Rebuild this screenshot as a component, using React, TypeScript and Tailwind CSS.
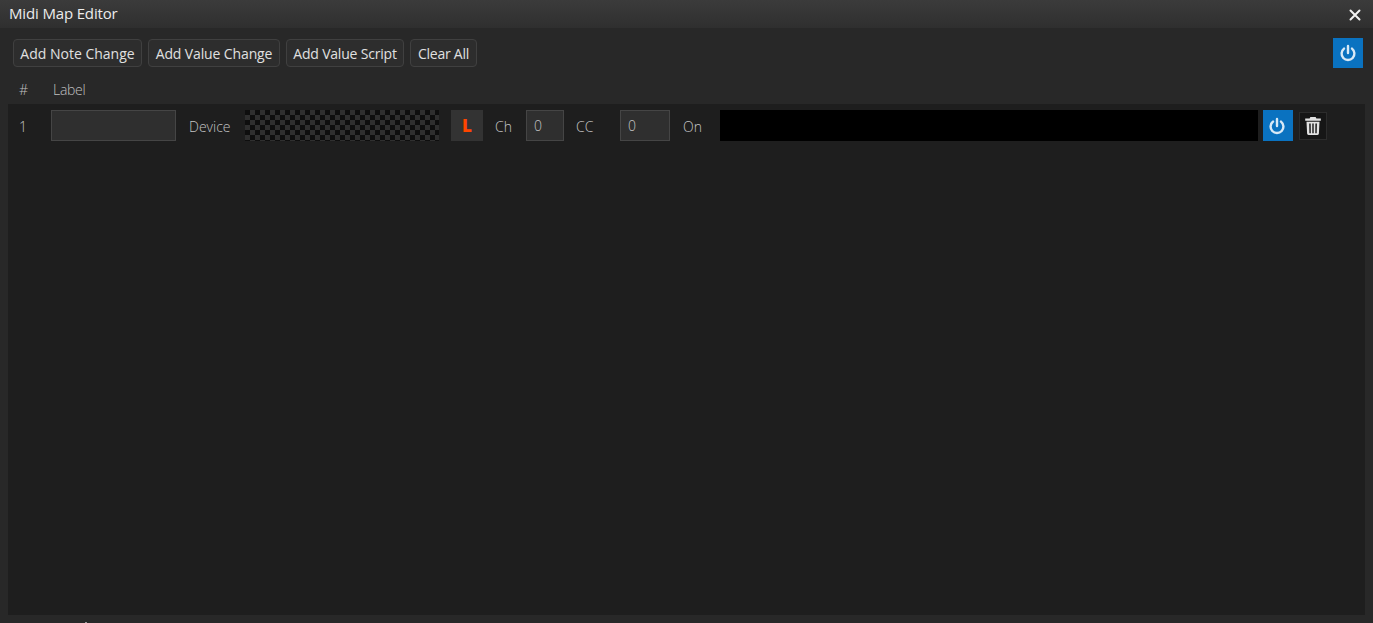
import React from "react";

const font = "font-['Open_Sans','Noto_Sans',sans-serif]";

function PowerIcon() {
  return (
    <svg width="18" height="18" viewBox="0 0 18 18" fill="none" stroke="#d8e9f6" strokeWidth="2.4" strokeLinecap="round">
      <path d="M9 2v7" />
      <path d="M5 4.6a6.4 6.4 0 1 0 8 0" />
    </svg>
  );
}

function TrashIcon() {
  return (
    <svg width="16" height="18" viewBox="0 0 16 18" fill="#e2e2e2">
      <path d="M5.4 0h5.2l0.8 1.6H15.8v2.2H0.2V1.6h4.4z" />
      <path fillRule="evenodd" d="M1.5 4.7h13L13.9 16.6a1.4 1.4 0 0 1-1.4 1.4H3.5a1.4 1.4 0 0 1-1.4-1.4zM4.2 6.6l0.2 9.6h1.4l-0.1-9.6zM7.3 6.6v9.6h1.4v-9.6zM10.4 6.6l-0.1 9.6h1.4l0.2-9.6z" />
    </svg>
  );
}

function Btn({ children, className }: { children: React.ReactNode; className: string }) {
  return (
    <button className={"h-[28px] pt-[2px] rounded-[4px] border border-[#404040] bg-[#2d2d2d] text-[14px] leading-[24px] text-[#e0e0e0] whitespace-nowrap text-center " + className}>
      {children}
    </button>
  );
}

function Field({ children, className }: { children?: React.ReactNode; className: string }) {
  return (
    <div className={"h-[31px] border border-[#454545] bg-[#2f2f2f] text-[14px] text-[#c4c4c4] flex items-center px-[7px] " + className}>
      {children}
    </div>
  );
}

export default function App() {
  return (
    <div className={"relative w-[1373px] h-[623px] overflow-hidden flex flex-col bg-[#282828] " + font}>
      <header className="h-[28px] shrink-0 flex items-center justify-between pl-[9px] pr-[12px] bg-gradient-to-b from-[#3b3b3b] to-[#2f2f2f]">
        <span className="text-[15px] tracking-[-0.15px] text-[#ececec] -mt-[1px]">Midi Map Editor</span>
        <svg width="12" height="12" viewBox="0 0 12 12" stroke="#f2f2f2" strokeWidth="2" strokeLinecap="round" className="mt-[2px]">
          <path d="M1.5 1.5l9 9M10.5 1.5l-9 9" />
        </svg>
      </header>

      <div className="h-[48px] shrink-0 flex items-center justify-between pl-[13px] pr-[10px] pt-[2px]">
        <div className="flex gap-[6px]">
          <Btn className="w-[129px]">Add Note Change</Btn>
          <Btn className="w-[132px] tracking-[-0.12px]">Add Value Change</Btn>
          <Btn className="w-[118px] tracking-[-0.2px]">Add Value Script</Btn>
          <Btn className="w-[67px] tracking-[-0.25px]">Clear All</Btn>
        </div>
        <button className="w-[30px] h-[30px] flex items-center justify-center bg-[#0a72c0]">
          <PowerIcon />
        </button>
      </div>

      <div className="h-[28px] shrink-0 flex items-center pb-[2px] text-[14px] font-light text-[#c0c0c0]">
        <span className="w-[53px] pl-[19px]">#</span>
        <span className="tracking-[-0.3px]">Label</span>
      </div>

      <div className="flex-1 mx-[8px] mb-[8px] bg-[#1e1e1e] pt-[6px]">
        <div className="flex items-center h-[31px] text-[14px] font-light text-[#c4c4c4]">
          <span className="w-[43px] pl-[11px] pt-[2px]">1</span>
          <Field className="w-[125px]" />
          <span className="ml-[13px] w-[56px] pt-[2px]">Device</span>
          <div className="w-[194px] mr-[1px] h-[31px] bg-[conic-gradient(#2f2f2f_25%,#0e0e0e_0_50%,#2f2f2f_0_75%,#0e0e0e_0)] bg-[length:10px_10px]" />
          <div className="ml-[11px] w-[32px] h-[31px] flex items-center justify-center bg-[#333333] text-[17px] font-extrabold text-[#ff4500]">L</div>
          <span className="ml-[12px] w-[31px] pt-[2px]">Ch</span>
          <Field className="w-[38px] font-light">0</Field>
          <span className="ml-[12px] w-[32px] pt-[2px]">CC</span>
          <Field className="w-[50px] ml-[12px] font-light">0</Field>
          <span className="ml-[13px] w-[37px] pt-[2px]">On</span>
          <div className="w-[538px] h-[31px] bg-black" />
          <button className="ml-[5px] w-[30px] h-[31px] pr-[2px] flex items-center justify-center bg-[#0a72c0]">
            <PowerIcon />
          </button>
          <button className="ml-[6px] w-[28px] h-[28px] flex items-center justify-center bg-[#161616] border border-[#2c2c2c]">
            <TrashIcon />
          </button>
        </div>
      </div>
      <div className="absolute left-[85px] top-[622px] w-[2px] h-[1px] bg-[#9a9a9a]" />
    </div>
  );
}
